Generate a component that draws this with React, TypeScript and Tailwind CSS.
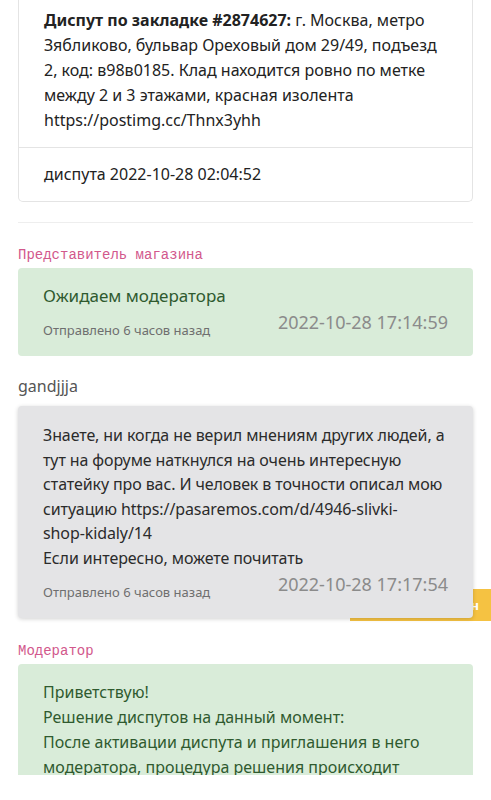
const font = { fontFamily: '"Noto Sans", "Open Sans", sans-serif' };

const Label = ({ children }: { children: React.ReactNode }) => (
  <div className="text-[14px] leading-[20px] text-[#d2588c] font-['Liberation_Mono',monospace] mb-[3px]">
    {children}
  </div>
);

const Meta = ({ date }: { date: string }) => (
  <div className="flex items-end justify-between mt-[2px]">
    <span className="text-[13px] leading-[18px] text-[#6f6f6f]">Отправлено 6 часов назад</span>
    <span className="text-[18px] leading-[24px] text-[#8b8b8b] mb-[5px]">{date}</span>
  </div>
);

const App = () => {
  return (
    <div className="w-[491px] h-[800px] overflow-hidden bg-white text-[16px] leading-[25px]" style={font}>
      <div className="mx-[18px] border border-t-0 border-[#e4e4e4] rounded-b-[5px] text-[#222]">
        <div className="px-[25px] pt-[8px] pb-[14px]">
          <b>Диспут по закладке #2874627:</b> г. Москва, метро Зябликово, бульвар Ореховый дом 29/49, подъезд 2,
          код: в98в0185. Клад находится ровно по метке между 2 и 3 этажами, красная изолента
          <br />
          https://postimg.cc/Thnx3yhh
        </div>
        <div className="border-t border-[#e4e4e4] px-[25px] pt-[14px] pb-[14px]">диспута 2022-10-28 02:04:52</div>
      </div>

      <div className="mx-[18px] mt-[20px] border-t border-[#eeeeee]" />

      <div className="mx-[18px] mt-[22px]">
        <Label>Представитель магазина</Label>
        <div className="bg-[#d9ecd9] rounded-[4px] px-[25px] pt-[15px] pb-[17px] text-[#2f5a2f]">
          <div className="text-[17px]">Ожидаем модератора</div>
          <Meta date="2022-10-28 17:14:59" />
        </div>
      </div>

      <div className="relative mx-[18px] mt-[20px]">
        <div className="text-[16px] leading-[20px] text-[#555] mb-[10px]">gandjjja</div>
        <div className="absolute right-[-18px] bottom-[-3px] w-[141px] h-[32px] bg-[#f5c242] text-white text-[13px] font-bold flex items-center justify-end pr-[12px]">
          н
        </div>
        <div className="relative bg-[#e4e4e6] rounded-[4px] px-[25px] pt-[17px] pb-[17px] text-[#2b2b2b] leading-[24.5px] shadow-[0_1px_4px_rgba(0,0,0,0.18)]">
          <div className="tracking-[-0.1px]">
            Знаете, ни когда не верил мнениям других людей, а
            <br />
            тут на форуме наткнулся на очень интересную
            <br />
            статейку про вас. И человек в точности описал мою
            <br />
            ситуацию https://pasaremos.com/d/4946-slivki-
            <br />
            shop-kidaly/14
            <br />
            Если интересно, можете почитать
          </div>
          <Meta date="2022-10-28 17:17:54" />
        </div>
      </div>

      <div className="mx-[18px] mt-[23px]">
        <Label>Модератор</Label>
        <div className="h-[111px] overflow-hidden bg-[#d9ecd9] rounded-t-[4px] px-[25px] pt-[16px] text-[#2f5a2f]">
          Приветствую!
          <br />
          Решение диспутов на данный момент:
          <br />
          После активации диспута и приглашения в него модератора, процедура решения происходит
        </div>
      </div>
    </div>
  );
};

export default App;
